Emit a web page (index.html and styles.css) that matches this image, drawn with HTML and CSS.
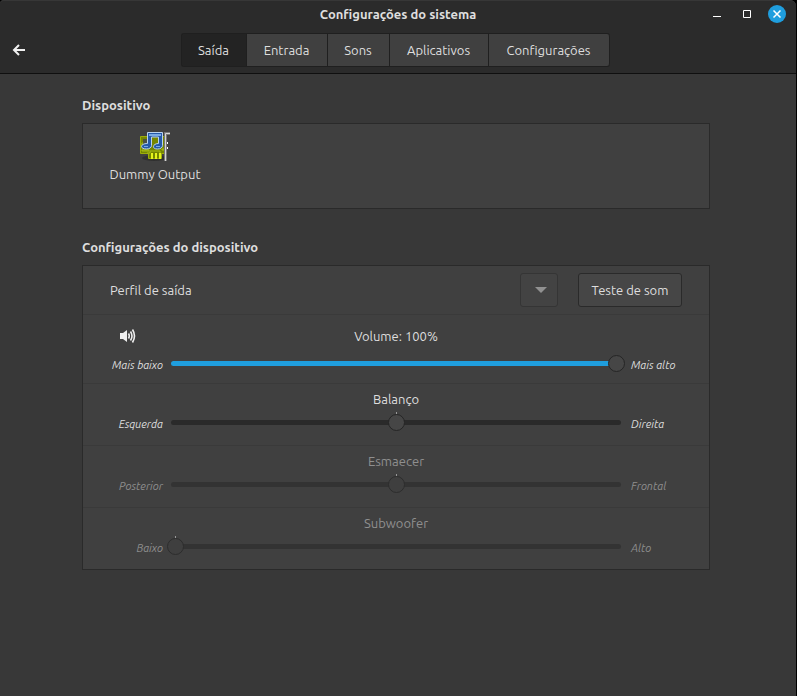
FILE: index.html
```html
<!DOCTYPE html>
<html lang="pt-BR">
<head>
<meta charset="utf-8">
<title>Configurações do sistema</title>
<link rel="stylesheet" href="styles.css">
</head>
<body>
<div class="window">
  <header class="header">
    <div class="titlebar">
      <h1 class="title">Configurações do sistema</h1>
      <div class="controls">
        <button class="control" type="button" aria-label="Minimizar"><svg width="18" height="18" viewBox="0 0 18 18"><path d="M5 11h8v1H5z" fill="#fff"/></svg></button>
        <button class="control" type="button" aria-label="Maximizar"><svg width="18" height="18" viewBox="0 0 18 18"><path d="M5.500 5.500h7v7h-7z" fill="none" stroke="#fff"/></svg></button>
        <button class="control close" type="button" aria-label="Fechar"><svg width="18" height="18" viewBox="0 0 18 18"><path d="M5.500 5.500l7 7M12.500 5.500l-7 7" stroke="#fff" stroke-width="1.500"/></svg></button>
      </div>
    </div>
    <div class="toolbar">
      <button class="back" type="button" aria-label="Voltar"><svg width="14" height="14" viewBox="0 0 14 14"><path d="M13 7H2.500M7 2L2 7l5 5" fill="none" stroke="#f0f0f0" stroke-width="2"/></svg></button>
      <nav class="tabs">
        <button class="tab active" type="button">Saída</button>
        <button class="tab" type="button">Entrada</button>
        <button class="tab" type="button">Sons</button>
        <button class="tab" type="button">Aplicativos</button>
        <button class="tab" type="button">Configurações</button>
      </nav>
    </div>
  </header>
  <main class="content">
    <section>
      <h2 class="heading">Dispositivo</h2>
      <div class="panel devices">
        <button class="device" type="button">
          <svg width="32" height="32" viewBox="0 0 32 32">
            <ellipse cx="15" cy="27" rx="12" ry="3" fill="#303030"/>
            <path d="M1.500 5.500h25v17h-4v5h-13v-5h-8z" fill="#758600" stroke="#9dad08"/>
            <path d="M3 12h3v2H3zM3 19h7v1H3zM23 18h3v1h-3zM8 22h3v-2h10v2" fill="none" stroke="#a8bd17"/>
            <path d="M4 8h6v5H4z" fill="#4b5140"/>
            <path d="M12 22h2v6h-2zM16 22h2v6h-2zM20 22h2v6h-2z" fill="#e5f51d"/>
            <path d="M8.500 1.500h15v13c0 2-2 3.500-5 3.500s-4-1-4-2.500 2-3 5-3V6h-7v8.500c0 2-2 3.500-5 3.500s-5-1-5-2.500 2-3 6-3z" fill="#2459a8" stroke="#b9d3ee"/>
            <path d="M10 3h12v2H10zM5 15h4v1H5zM17 15h4v1h-4z" fill="#78a9e2"/>
            <path d="M26.500 30V2.500H31" fill="none" stroke="#777" stroke-width="3"/>
            <path d="M26.500 30V2.500H31" fill="none" stroke="#d5d5d2"/>
            <path d="M28 11h1v2h-1zM28 16h1v2h-1z" fill="#fff"/>
          </svg>
          <span>Dummy Output</span>
        </button>
      </div>
    </section>
    <section>
      <h2 class="heading">Configurações do dispositivo</h2>
      <div class="panel">
        <div class="profile">
          <label for="profile">Perfil de saída</label>
          <select class="combo" id="profile" disabled></select>
          <button class="test" type="button">Teste de som</button>
        </div>
        <div class="row volume">
          <svg class="speaker" width="16" height="16" viewBox="0 0 16 16"><path d="M0 5h3l4-3v12l-4-3H0z" fill="#eee"/><path d="M8.500 5.500q1.500 2.500 0 5M10.500 3.500q3 4.500 0 9M12.500 1.500q4 6.500 0 13" fill="none" stroke="#eee" stroke-width="1.600"/></svg>
          <label class="name" for="vol">Volume: 100%</label>
          <span class="low">Mais baixo</span>
          <div class="scale full"><input id="vol" type="range" min="0" max="100" value="100"></div>
          <span class="high">Mais alto</span>
        </div>
        <div class="row">
          <label class="name" for="bal">Balanço</label>
          <span class="low">Esquerda</span>
          <div class="scale mark"><input id="bal" type="range" min="-100" max="100" value="0"></div>
          <span class="high">Direita</span>
        </div>
        <div class="row off">
          <label class="name" for="fade">Esmaecer</label>
          <span class="low">Posterior</span>
          <div class="scale mark"><input id="fade" type="range" min="-100" max="100" value="0" disabled></div>
          <span class="high">Frontal</span>
        </div>
        <div class="row off">
          <label class="name" for="sub">Subwoofer</label>
          <span class="low">Baixo</span>
          <div class="scale mark start"><input id="sub" type="range" min="0" max="100" value="0" disabled></div>
          <span class="high">Alto</span>
        </div>
      </div>
    </section>
  </main>
</div>
</body>
</html>
```
FILE: styles.css
```css
* { box-sizing: border-box; }
body {
  margin: 0;
  background: #000;
  color: #dedede;
  font: 13px/18px Ubuntu, "Noto Sans", sans-serif;
}
button, select { font: inherit; color: inherit; }
svg { display: block; }
.window {
  min-height: 100vh;
  margin-right: 1px;
  background: #383838;
  border-radius: 4px 6px 0 0;
}
.header {
  height: 74px;
  background: #2b2b2b;
  border-top: 1px solid #373737;
  border-bottom: 1px solid #0f0f0f;
  border-radius: 4px 6px 0 0;
}
.titlebar, .toolbar {
  display: grid;
  grid-template-columns: 1fr auto 1fr;
  align-items: center;
}
.titlebar { height: 26px; padding-right: 10px; padding-left: 10px; }
.title { grid-column: 2; margin: 0; font-size: 13px; font-weight: 600; }
.controls { display: flex; justify-content: flex-end; gap: 12px; }
.control {
  width: 18px;
  height: 18px;
  padding: 0;
  border: 0;
  border-radius: 50%;
  background: none;
}
.close { background: #1f9ede; }
.toolbar { height: 46px; padding: 0 12px 0 6px; }
.back { justify-self: start; padding: 6px; border: 0; background: none; }
.tabs {
  display: grid;
  grid-template-columns: 65px 81px 62px 99px 121px;
  height: 34px;
  border: 1px solid #1f1f1f;
  border-right: 0;
  border-radius: 3px;
}
.tab {
  padding: 0;
  border: 0;
  border-right: 1px solid #1f1f1f;
  background: #404040;
}
.tab.active { background: #232323; border-radius: 2px 0 0 2px; }
.tab:last-child { border-radius: 0 3px 3px 0; }
.content {
  display: grid;
  gap: 29px;
  padding: 22px 86px 40px 82px;
}
.heading { margin: 0 0 9px; font-size: 13px; font-weight: 700; }
.panel { background: #404040; border: 1px solid #2a2a2a; }
.devices { min-height: 86px; padding: 7px 20px; }
.device {
  display: flex;
  flex-direction: column;
  align-items: center;
  gap: 2px;
  width: 104px;
  padding: 0;
  border: 0;
  background: none;
  white-space: nowrap;
}
.profile {
  display: flex;
  align-items: center;
  gap: 20px;
  height: 48px;
  padding: 0 27px;
}
.profile label { flex: 1; }
.combo, .test {
  height: 34px;
  padding: 0;
  border: 1px solid #2a2a2a;
  border-radius: 3px;
  background: #464646;
}
.test { width: 104px; }
.combo {
  width: 38px;
  appearance: none;
  opacity: 1;
  border-color: #353535;
  background: #434343 url("data:image/svg+xml,%3Csvg xmlns='http://www.w3.org/2000/svg' width='12' height='6'%3E%3Cpath d='M0 0h12L6 6z' fill='%23919191'/%3E%3C/svg%3E") 14px 13px no-repeat;
}
.row {
  display: grid;
  grid-template-columns: 80px 1fr 80px;
  gap: 6px 4px;
  padding: 6px 0 14px;
  border-top: 1px solid #3a3a3a;
}
.volume { row-gap: 10px; padding: 12px 0 11px; }
.name { grid-column: 2; text-align: center; }
.speaker { justify-self: center; align-self: center; margin-left: 10px; }
.low, .high {
  height: 17px;
  padding-top: 1px;
  font-size: 11px;
  font-style: italic;
}
.low { text-align: right; grid-column: 1; }
.high { padding-left: 2px; }
.off .name, .off .low, .off .high { color: #8f8f8f; }
.scale { display: grid; align-items: center; height: 17px; }
.scale::before {
  content: "";
  grid-area: 1 / 1;
  height: 5px;
  margin: 0 4px;
  border-radius: 3px;
  background: #2a2a2a;
}
.full::before { background: #1f9ede; }
.off .scale::before { background: #333; }
.mark::after {
  content: "";
  grid-area: 1 / 1;
  place-self: start center;
  width: 1px;
  height: 2px;
  margin-top: -2px;
  background: #999;
}
.start::after { justify-self: start; margin-left: 8px; }
.scale input {
  grid-area: 1 / 1;
  width: 100%;
  height: 17px;
  margin: 0;
  appearance: none;
  background: none;
}
.scale input::-webkit-slider-thumb {
  appearance: none;
  width: 17px;
  height: 17px;
  border: 1px solid #252525;
  border-radius: 50%;
  background: #464646;
}
.off input::-webkit-slider-thumb { background: #3f3f3f; border-color: #2d2d2d; }
```
